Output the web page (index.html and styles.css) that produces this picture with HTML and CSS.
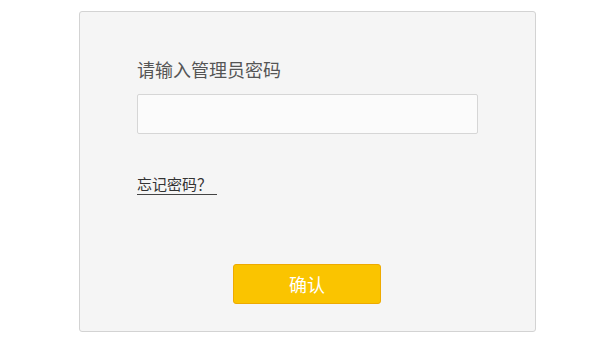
FILE: index.html
```html
<!DOCTYPE html>
<html lang="zh-CN">

<head>
    <meta charset="UTF-8">
    <meta name="viewport" content="width=device-width, initial-scale=1.0">
    <title>登录</title>
    <link rel="stylesheet" href="styles.css">
</head>

<body>
    <div class="login-box">
        <label class="login-label" for="pwd">请输入管理员密码</label>
        <input type="password" id="pwd" class="login-input">
        <a href="#" class="forgot">忘记密码？</a>
        <div class="btn-row">
            <button class="confirm">确认</button>
        </div>
    </div>
</body>

</html>
```

FILE: styles.css
```css
* {
    box-sizing: border-box;
    margin: 0;
    padding: 0;
}

body {
    font-family: 'Liberation Sans', 'Noto Sans CJK SC', sans-serif;
    background-color: #fff;
}

.login-box {
    margin: 11px 0 0 79px;
    width: 457px;
    height: 321px;
    background-color: #f5f5f5;
    border: 1px solid #d3d3d3;
    border-radius: 3px;
    padding: 47px 0 0 57px;
    display: flex;
    flex-direction: column;
    align-items: flex-start;
}

.login-label {
    font-size: 18px;
    line-height: 25px;
    color: #555;
}

.login-input {
    margin-top: 10px;
    width: 341px;
    height: 40px;
    border: 1px solid #d6d6d6;
    border-radius: 2px;
    background-color: #fbfbfb;
    outline: none;
}

.forgot {
    margin-top: 41px;
    font-size: 15px;
    line-height: 19px;
    color: #333;
    text-decoration: none;
    border-bottom: 1px solid #444;
    padding-right: 5px;
}

.btn-row {
    margin-top: 69px;
    padding-left: 96px;
}

.confirm {
    width: 148px;
    height: 40px;
    background-color: #fac400;
    border: 1px solid #eeaa00;
    border-radius: 3px;
    color: #fff;
    font-family: inherit;
    font-size: 18px;
    cursor: pointer;
}
```
